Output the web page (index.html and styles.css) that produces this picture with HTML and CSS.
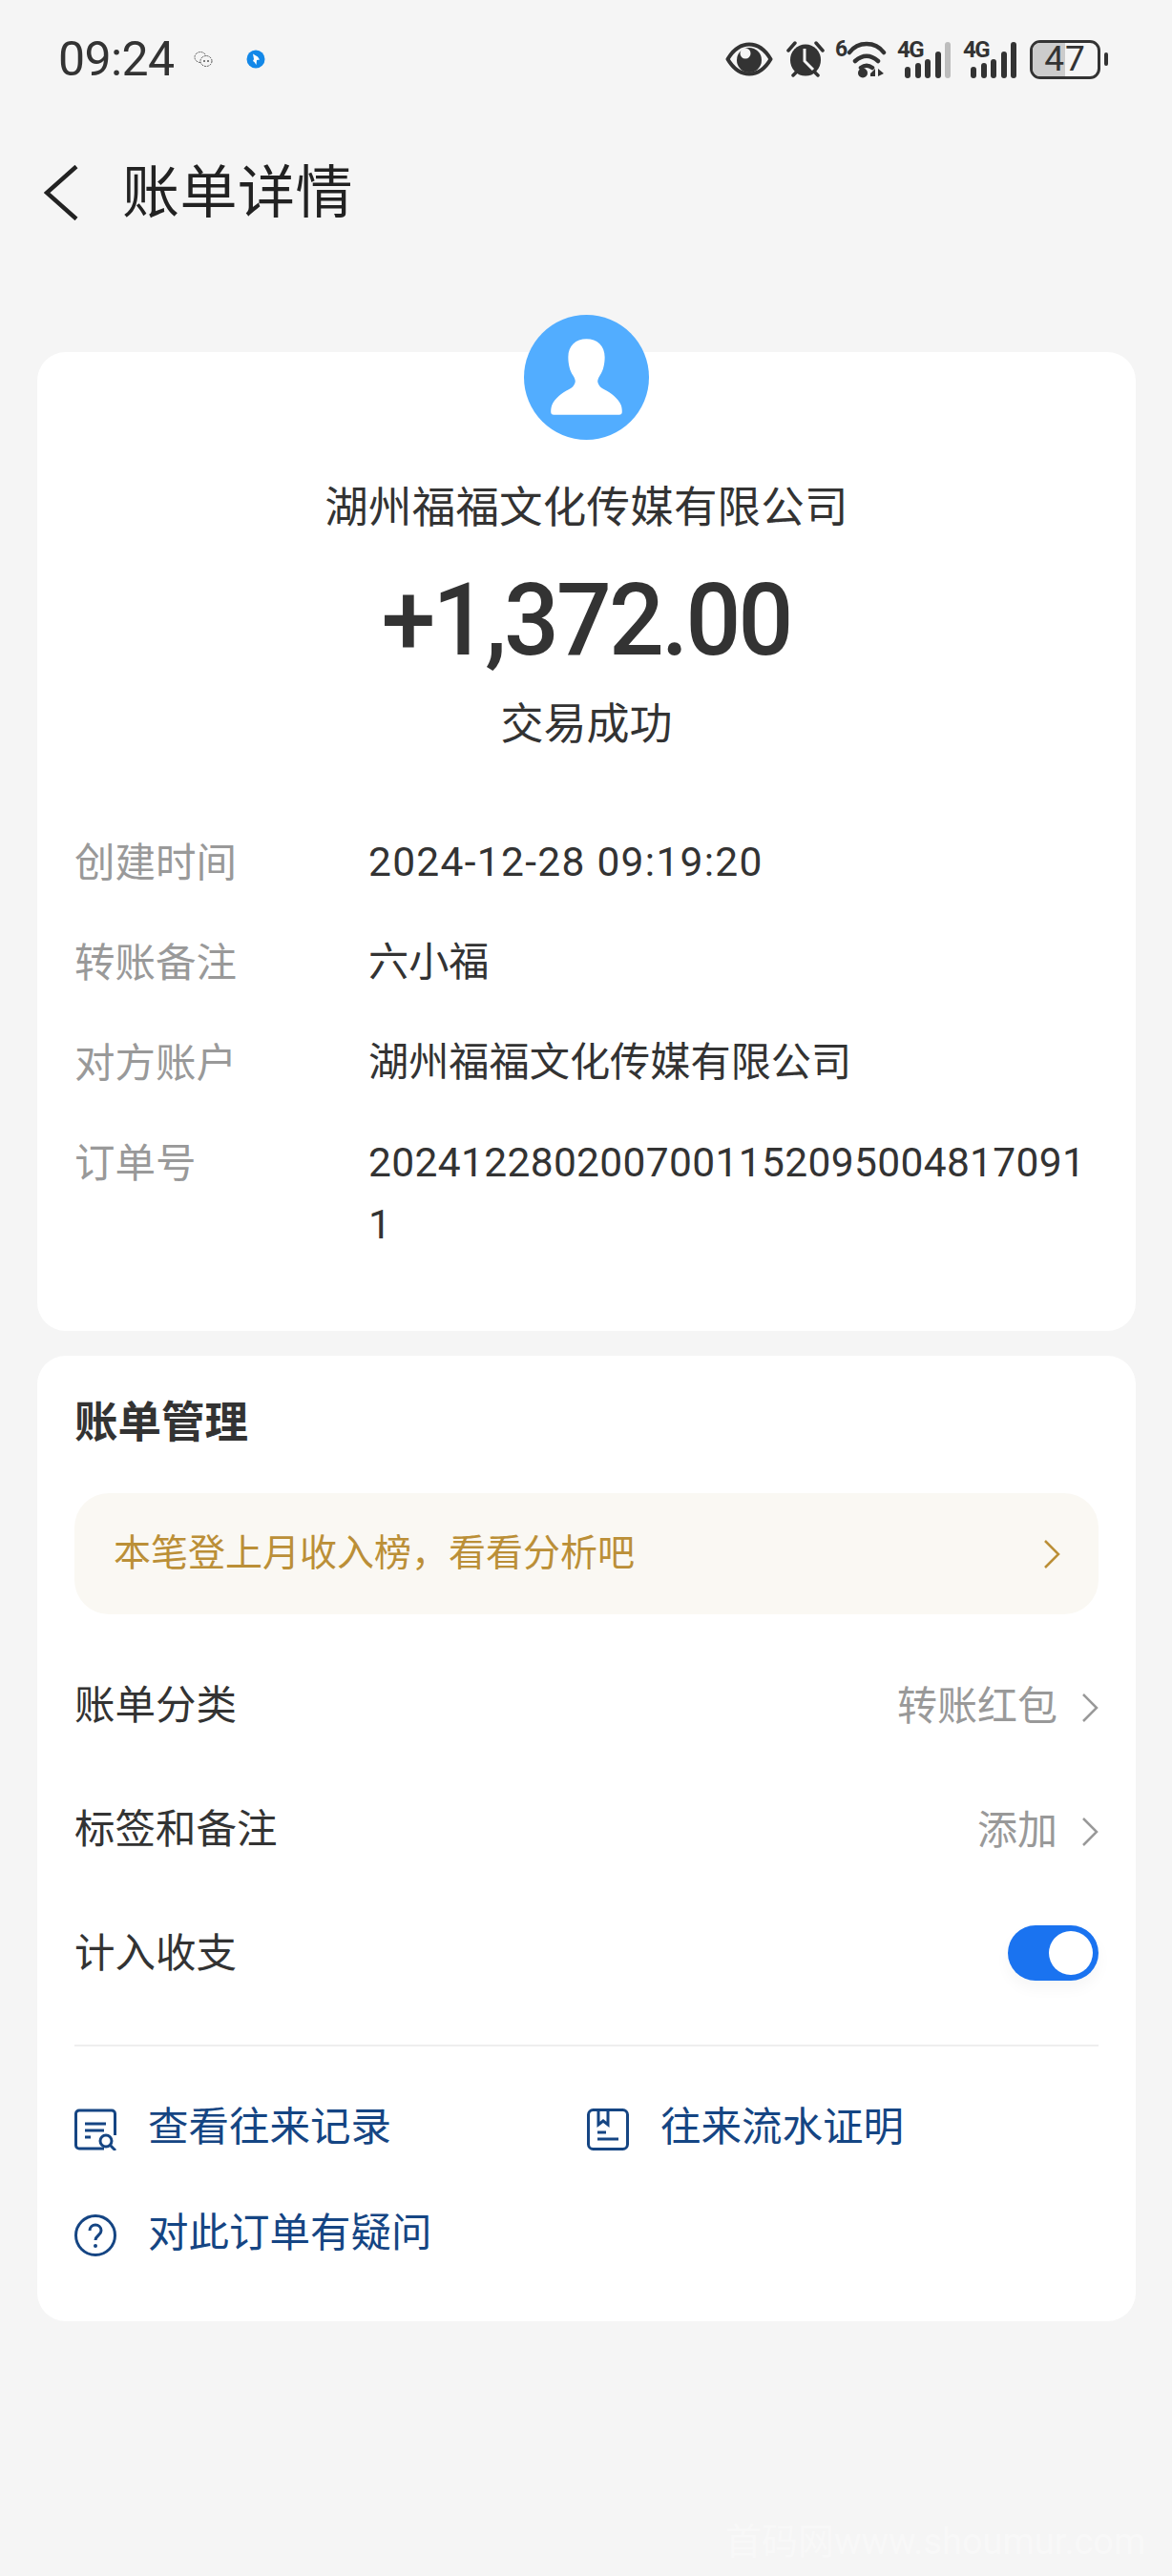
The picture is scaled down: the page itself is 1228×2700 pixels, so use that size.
FILE: index.html
```html
<!DOCTYPE html>
<html lang="zh-CN">
<head>
<meta charset="utf-8">
<title>账单详情</title>
<link rel="stylesheet" href="styles.css">
</head>
<body>
<div class="page">
  <header class="status">
    <div class="status-left">
      <span class="time">09:24</span>
      <svg class="ic-wechat" viewBox="0 0 20 18"><g fill="none" stroke="#555" stroke-width="1" stroke-dasharray="2 1"><ellipse cx="7" cy="7" rx="6" ry="5.5"/><ellipse cx="13" cy="11" rx="6" ry="5.5" fill="#f5f5f5"/></g><circle cx="11" cy="11" r="1" fill="#555"/><circle cx="15" cy="11" r="1" fill="#555"/></svg>
      <svg class="ic-blue" viewBox="0 0 20 20"><circle cx="10" cy="10" r="9.5" fill="#1388e8"/><path d="M7 4.5l5 3 2 3-3 .5-.5 5-2-3-1.5-1 1-2z" fill="#fff"/></svg>
    </div>
    <div class="status-right">
      <svg class="ic-eye" viewBox="0 0 50 36"><path d="M2.5 18C9 7 16 2.5 25 2.500S41 7 47.500 18C41 29 34 33.500 25 33.500S9 29 2.500 18z" fill="none" stroke="#333" stroke-width="4" stroke-linejoin="round"/><circle cx="25" cy="19" r="13" fill="#333"/><circle cx="21" cy="12" r="5.500" fill="#f5f5f5"/></svg>
      <svg class="ic-alarm" viewBox="0 0 40 38"><path d="M2 10L9 2M38 10L31 2M7 36l5-5M33 36l-5-5" stroke="#333" stroke-width="3.500" stroke-linecap="round"/><ellipse cx="20" cy="20" rx="16" ry="16.500" fill="#333"/><path d="M19 8v13l9 9" fill="none" stroke="#f5f5f5" stroke-width="3"/></svg>
      <div class="wifi">
        <span class="wifi-6">6</span>
        <svg class="ic-wifi" viewBox="0 0 42 40"><path d="M3 13C12 1 30 1 39 13M9 22c8-7 16-7 24 0M15 29c4-3 8-3 12 0" fill="none" stroke="#333" stroke-width="4.500" stroke-linecap="round"/><circle cx="17" cy="34.500" r="5" fill="#333"/><path d="M25 35l5-5v8h-5zM33 30l6 5-6 3z" fill="#333"/></svg>
      </div>
      <div class="signal">
        <span class="net">4G</span>
        <div class="bars"><i class="b1"></i><i class="b2"></i><i class="b3"></i><i class="b4"></i><i class="b5 off"></i></div>
      </div>
      <div class="signal">
        <span class="net">4G</span>
        <div class="bars"><i class="b1"></i><i class="b2"></i><i class="b3"></i><i class="b4"></i><i class="b5"></i></div>
      </div>
      <div class="battery"><div class="cell"><span class="fill"></span><span class="level">47</span></div><span class="nub"></span></div>
    </div>
  </header>

  <nav class="toolbar">
    <svg class="back" viewBox="0 0 36 58"><path d="M34 1.500L3 29l31 27.500" fill="none" stroke="#222" stroke-width="4.500"/></svg>
    <h1 class="title">账单详情</h1>
  </nav>

  <main class="content">
    <section class="card card-detail">
      <svg class="avatar" viewBox="0 0 130 130"><circle cx="65" cy="65" r="65" fill="#52adff"/><path d="M65 25c-11 0-19 7-19 19 0 8 2 15 5 19 2 3 3 6 2 8-1 3-3 5-7 7-6 3-14 9-17 16-1 3-1 6-1 7 0 2 1 3 3 3h68c2 0 3-1 3-3 0-1 0-4-1-7-3-7-11-13-17-16-4-2-6-4-7-7-1-2 0-5 2-8 3-4 5-11 5-19 0-12-8-19-19-19z" fill="#fff"/></svg>
      <div class="payee">湖州福福文化传媒有限公司</div>
      <div class="amount">+1,372.00</div>
      <div class="result">交易成功</div>
      <dl class="details">
        <div class="detail"><dt>创建时间</dt><dd class="date">2024-12-28 09:19:20</dd></div>
        <div class="detail"><dt>转账备注</dt><dd>六小福</dd></div>
        <div class="detail"><dt>对方账户</dt><dd>湖州福福文化传媒有限公司</dd></div>
        <div class="detail"><dt>订单号</dt><dd class="order">20241228020070011520950048170911</dd></div>
      </dl>
    </section>

    <section class="card card-manage">
      <h2 class="manage-title">账单管理</h2>
      <div class="banner">
        <span class="banner-text">本笔登上月收入榜，看看分析吧</span>
        <svg class="chev" viewBox="0 0 17 30"><path d="M1 1l14 14L1 29" fill="none" stroke="#bb8f37" stroke-width="2.500"/></svg>
      </div>
      <div class="rows">
        <div class="row"><span class="row-label">账单分类</span><span class="row-end"><span class="muted">转账红包</span><svg class="chev chev-row" viewBox="0 0 17 30"><path d="M1 1l14 14L1 29" fill="none" stroke="#999" stroke-width="2.500"/></svg></span></div>
        <div class="row"><span class="row-label">标签和备注</span><span class="row-end"><span class="muted">添加</span><svg class="chev chev-row" viewBox="0 0 17 30"><path d="M1 1l14 14L1 29" fill="none" stroke="#999" stroke-width="2.500"/></svg></span></div>
        <div class="row"><span class="row-label">计入收支</span><span class="toggle"><span class="knob"></span></span></div>
      </div>
      <div class="links">
        <div class="link">
          <svg class="link-ic" viewBox="0 0 44 44"><path d="M31 42H5a3.500 3.500 0 0 1-3.500-3.500v-33A3.500 3.500 0 0 1 5 2h34a3.500 3.500 0 0 1 3.500 3.500V28" fill="none" stroke="#154583" stroke-width="3"/><path d="M11 16h22M11 23h20M11 30h6" stroke="#154583" stroke-width="3"/><circle cx="33" cy="34" r="6" fill="#fff" stroke="#154583" stroke-width="3"/><path d="M37 38l6 6" stroke="#154583" stroke-width="3"/></svg>
          <span class="link-text">查看往来记录</span>
        </div>
        <div class="link">
          <svg class="link-ic" viewBox="0 0 44 44"><rect x="1.500" y="1.500" width="41" height="41" rx="5" fill="none" stroke="#154583" stroke-width="3"/><path d="M12 2v15l5-4 5 4V2" fill="none" stroke="#154583" stroke-width="3"/><path d="M11 25h9M11 32h22" stroke="#154583" stroke-width="3"/></svg>
          <span class="link-text">往来流水证明</span>
        </div>
        <div class="link">
          <svg class="link-ic" viewBox="0 0 44 44"><circle cx="22" cy="22" r="20.500" fill="none" stroke="#154583" stroke-width="3"/><path d="M16 17c0-4 3-6 6-6s6 2 6 6c0 5-6 5-6 10" fill="none" stroke="#154583" stroke-width="3"/><circle cx="22" cy="33" r="2" fill="#154583"/></svg>
          <span class="link-text">对此订单有疑问</span>
        </div>
      </div>
    </section>
  </main>
  <div class="watermark">首码网www.shoumur.com</div>
</div>
</body>
</html>
```
FILE: styles.css
```css
* { box-sizing: border-box; }
html, body { margin: 0; padding: 0; background: #f5f5f5; }
body { font-family: "Noto Sans CJK SC", "Noto Sans", sans-serif; color: #333; }
.page { position: relative; width: 1228px; height: 2700px; overflow: hidden; }

.status { display: flex; justify-content: space-between; align-items: center; height: 124px; padding: 0 67px 0 61px; }
.status-left { display: flex; align-items: center; }
.time { font-family: "Roboto", sans-serif; font-size: 50px; line-height: 60px; color: #333; letter-spacing: -0.6px; width: 142px; }
.ic-wechat { width: 20px; height: 18px; }
.ic-blue { width: 20px; height: 20px; margin-left: 35px; }
.status-right { display: flex; align-items: center; }
.ic-eye { width: 50px; height: 36px; }
.ic-alarm { width: 40px; height: 38px; margin-left: 14px; }
.wifi { display: flex; align-items: flex-start; margin-left: 11px; height: 40px; }
.wifi-6 { font: 700 23px/20px "Roboto", sans-serif; color: #333; width: 12px; }
.ic-wifi { width: 42px; height: 40px; }
.signal { position: relative; width: 56px; height: 40px; margin-left: 11px; }
.signal + .signal { margin-left: 13px; }
.net { position: absolute; left: 0; top: 0; font: 700 24px/20px "Roboto", sans-serif; letter-spacing: -1.5px; color: #333; }
.bars { position: absolute; left: 8px; bottom: 0; display: flex; align-items: flex-end; gap: 4.500px; }
.bars i { display: block; width: 6px; background: #333; border-radius: 3px; }
.b1 { height: 12px; } .b2 { height: 16px; } .b3 { height: 20px; } .b4 { height: 28px; } .b5 { height: 38px; }
.bars .off { background: #bdbdbd; }
.battery { display: flex; align-items: center; margin-left: 14px; }
.cell { position: relative; width: 74px; height: 41px; border: 3.500px solid #333; border-radius: 11px; overflow: hidden; display: flex; align-items: center; justify-content: center; }
.fill { position: absolute; left: 0; top: 0; bottom: 0; width: 34px; background: #ccc; }
.level { position: relative; font: 400 37px/34px "Roboto", sans-serif; letter-spacing: 1px; color: #333; }
.nub { width: 4px; height: 14px; margin-left: 4px; background: #333; border-radius: 2px; }

.toolbar { display: flex; align-items: center; height: 152px; margin-bottom: 93px; padding-left: 46px; }
.back { width: 36px; height: 58px; margin-top: 3px; }
.title { margin: -6px 0 0 46px; font-size: 60px; font-weight: 400; line-height: 80px; color: #222; letter-spacing: 0.5px; }

.content { display: flex; flex-direction: column; gap: 26px; padding: 0 38px 0 39px; }
.card { background: #fff; border-radius: 30px; padding: 0 39px; }
.card-detail { display: flex; flex-direction: column; align-items: center; padding-bottom: 79px; }
.avatar { width: 131px; height: 131px; margin-top: -39px; flex: none; }
.payee { margin-top: 37px; font-size: 45.500px; line-height: 60px; color: #333; letter-spacing: 0.2px; }
.amount { margin-top: 33px; font-family: "Roboto", sans-serif; font-weight: 500; font-size: 105px; line-height: 120px; letter-spacing: -3px; color: #333; transform: scaleX(0.97); }
.result { margin-top: 15px; font-size: 45px; line-height: 60px; color: #333; }
.details { align-self: stretch; margin: 85px 0 0; display: flex; flex-direction: column; gap: 40px; }
.detail { display: grid; grid-template-columns: 308px 1fr; }
.detail dt { margin-top: -3px; font-size: 42.500px; line-height: 65px; color: #999; }
.detail dd { margin: 0; font-family: "Roboto", "Noto Sans CJK SC", sans-serif; font-size: 42.200px; line-height: 65px; color: #333; word-break: break-all; }
.detail .date { font-size: 42.500px; letter-spacing: 1.3px; }
.detail .order { font-size: 42.500px; letter-spacing: 0.35px; }

.card-manage { padding-top: 36px; padding-bottom: 68px; }
.manage-title { margin: 0; font-size: 45.500px; font-weight: 700; line-height: 60px; color: #333; }
.banner { display: flex; justify-content: space-between; align-items: center; height: 127px; margin-top: 48px; padding: 0 40px 0 41px; background: #faf8f3; border-radius: 36px; font-size: 39px; color: #bb8f37; }
.banner-text { padding-bottom: 10px; }
.chev { width: 17px; height: 30px; flex: none; }
.chev-row { margin-top: 6px; }
.rows { margin-top: 30px; }
.row { display: flex; justify-content: space-between; align-items: center; height: 130px; font-size: 42.500px; color: #333; }
.row-label { padding-bottom: 7px; }
.row-end { display: flex; align-items: center; gap: 26px; }
.muted { color: #999; padding-bottom: 5px; font-size: 42px; }
.toggle { position: relative; width: 95px; height: 58px; border-radius: 29px; background: #1a73f0; box-shadow: 0 8px 16px rgba(0, 0, 0, 0.04); }
.knob { position: absolute; top: 6px; right: 6px; width: 46px; height: 46px; border-radius: 50%; background: #fff; }
.links { display: grid; grid-template-columns: 537px 1fr; row-gap: 67px; margin-top: 31px; padding-top: 65px; border-top: 2px solid #eee; }
.link { display: flex; align-items: center; gap: 33px; height: 44px; font-size: 42.500px; color: #154583; }
.link-text { padding-bottom: 14px; }
.link-ic { width: 44px; height: 44px; flex: none; }

.watermark { position: absolute; left: 760px; top: 2644px; font-family: "Roboto", "Noto Sans CJK SC", sans-serif; font-size: 38px; line-height: 40px; color: rgba(255, 255, 255, 0.35); white-space: nowrap; }
```
